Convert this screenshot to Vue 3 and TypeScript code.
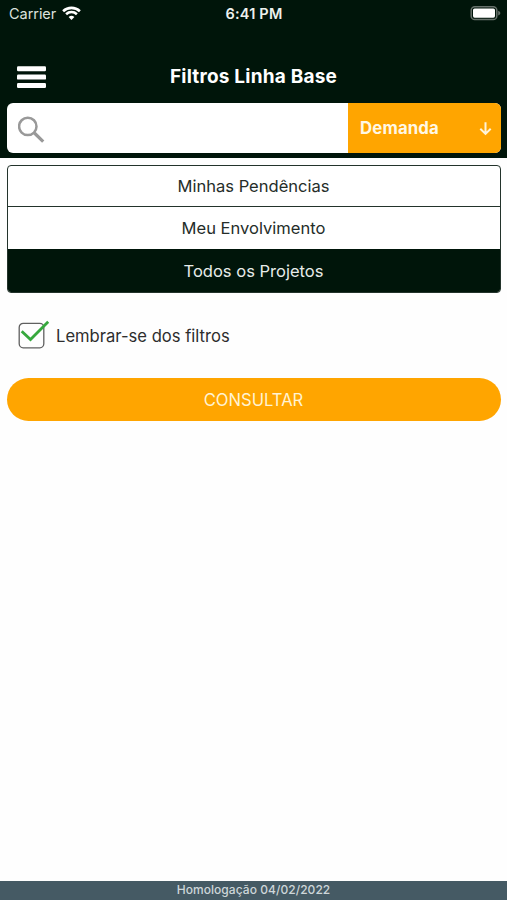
<script setup lang="ts">
import { ref } from 'vue'

const query = ref<string>('')
const remember = ref<boolean>(true)
const selected = ref<number>(2)
const options: { label: string; cls: string }[] = [
  { label: 'Minhas Pendências', cls: 'pending' },
  { label: 'Meu Envolvimento', cls: 'involved' },
  { label: 'Todos os Projetos', cls: 'all' },
]
</script>

<template>
  <div class="screen">
    <header class="header">
      <div class="status">
        <div class="carrier">
          <span class="carrier-name">Carrier</span>
          <svg class="wifi" width="19" height="15" viewBox="0 0 19 15">
            <path d="M1.1 5.2a12.2 12.2 0 0 1 16.8 0" />
            <path d="M4.1 8.2a7.9 7.9 0 0 1 10.8 0" />
            <path class="dot" d="M9.5 14 6.6 11.1a4.2 4.2 0 0 1 5.8 0z" />
          </svg>
        </div>
        <span class="time">6:41 PM</span>
        <svg class="battery" width="31" height="16" viewBox="0 0 31 16">
          <rect class="case" x="1.2" y="1.7" width="25.6" height="12.8" rx="3.6" />
          <rect class="charge" x="3" y="3.5" width="22" height="9.2" rx="1.6" />
          <path class="tip" d="M28.2 5.8c2.8 1.2 2.8 3.6 0 4.8z" />
        </svg>
      </div>
      <div class="navbar">
        <button class="menu" aria-label="Menu">
          <svg width="29" height="22" viewBox="0 0 29 22">
            <rect y="0.2" width="29" height="5" rx="1.2" />
            <rect y="8.6" width="29" height="5" rx="1.2" />
            <rect y="17" width="29" height="5" rx="1.2" />
          </svg>
        </button>
        <h1><span class="title">Filtros Linha Base</span></h1>
      </div>
      <div class="search">
        <label class="field">
          <svg width="28" height="28" viewBox="0 0 28 28">
            <circle cx="9.8" cy="10.4" r="8.7" />
            <path class="handle" d="m16.4 17 8.8 8.6" />
          </svg>
          <input v-model="query" type="text" />
        </label>
        <button class="type">
          <span class="type-name">Demanda</span>
          <svg width="13" height="15" viewBox="0 0 13 15">
            <path d="M6.5 1.2v11.6M1.3 7.7l5.2 5.2 5.2-5.2" />
          </svg>
        </button>
      </div>
    </header>

    <main class="content">
      <div class="options">
        <button
          v-for="(option, i) in options"
          :key="option.cls"
          class="option"
          :class="{ active: selected === i }"
          @click="selected = i"
        >
          <span :class="option.cls">{{ option.label }}</span>
        </button>
      </div>
      <div class="remember" @click="remember = !remember">
        <svg width="34" height="30" viewBox="0 0 34 30">
          <rect class="box" x="1.2" y="3.4" width="24.6" height="24.4" rx="4" />
          <path v-if="remember" class="check" d="m3.7 11.2 8.8 8.3L30.2 1.8" />
        </svg>
        <span class="remember-text">Lembrar-se dos filtros</span>
      </div>
      <button class="submit"><span class="submit-text">CONSULTAR</span></button>
    </main>

    <footer class="footer"><span class="build">Homologação 04/02/2022</span></footer>
  </div>
</template>

<style>
body {
  background: #fff;
}
</style>

<style scoped>
.screen {
  display: flex;
  flex-direction: column;
  height: 900px;
  font-family: Inter, "Liberation Sans", sans-serif;
  background: #fefefe;
}
.screen * {
  box-sizing: border-box;
}
button {
  padding: 0;
  border: 0;
  background: none;
  font: inherit;
  color: inherit;
}
svg {
  display: block;
  flex: none;
  fill: none;
}
span {
  white-space: nowrap;
}
.header {
  height: 158px;
  background: #00150a;
  color: #fff;
}
.status {
  display: grid;
  grid-template-columns: 1fr auto 1fr;
  align-items: center;
  height: 26px;
  padding: 0 6px 0 9px;
}
.carrier {
  display: flex;
  align-items: center;
  gap: 6px;
}
.carrier-name {
  font-size: 14.5px;
  letter-spacing: -0.05px;
  color: #dce2dd;
}
.wifi path {
  stroke: #fff;
  stroke-width: 2.6;
}
.wifi .dot {
  stroke: none;
  fill: #fff;
}
.time {
  margin-right: 2px;
  font-size: 14.5px;
  letter-spacing: 0.2px;
  font-weight: 600;
  color: #edf1ee;
}
.battery {
  justify-self: end;
}
.case {
  stroke: #66716b;
  stroke-width: 1.5;
}
.charge {
  fill: #fff;
}
.tip {
  fill: #66716b;
}
.navbar {
  display: grid;
  grid-template-columns: 50px 1fr 50px;
  align-items: center;
  height: 77px;
  padding-top: 24px;
}
.menu {
  width: 29px;
  margin-left: 17px;
}
.menu svg {
  margin-top: 1px;
  fill: #fff;
}
h1 {
  margin: 0;
  font-size: 19px;
  line-height: 24px;
  font-weight: 700;
  letter-spacing: 0.2px;
  text-align: center;
}
.search {
  display: flex;
  height: 50px;
  margin: 0 6px 0 7px;
  border-radius: 6px;
  overflow: hidden;
  background: #fff;
}
.field {
  display: flex;
  flex: 1;
  align-items: center;
  padding: 4px 0 0 10.5px;
}
.field svg {
  stroke: #999;
  stroke-width: 2.5;
}
.field .handle {
  stroke-width: 3.2;
}
.field input {
  flex: 1;
  min-width: 0;
  border: 0;
  outline: 0;
  background: transparent;
  font: inherit;
}
.type {
  display: flex;
  align-items: center;
  justify-content: space-between;
  width: 153px;
  padding: 0 9px 0 12px;
  background: #ffa500;
}
.type-name {
  font-size: 16.8px;
  font-weight: 700;
  letter-spacing: 0.15px;
  color: #fff8e5;
}
.type svg {
  stroke: #fff4d8;
  stroke-width: 2;
}
.content {
  flex: 1;
  padding: 7px 6px 0 7px;
}
.options {
  height: 128px;
  border: 1px solid #23332b;
  border-radius: 4px;
  overflow: hidden;
  background: #fff;
}
.option {
  display: flex;
  align-items: center;
  justify-content: center;
  width: 100%;
  height: 42px;
  padding-right: 1px;
  font-size: 16.55px;
  color: #252d29;
}
.option:first-child {
  height: 41px;
  border-bottom: 1px solid #23332b;
}
.option.active {
  height: 43px;
  background: #00150a;
  color: #e7ece9;
}
.remember {
  display: flex;
  align-items: center;
  height: 30px;
  margin-top: 27px;
  padding-left: 11px;
}
.remember-text {
  margin-left: 4px;
  padding-top: 1px;
  font-size: 16.6px;
  color: #2e2e2e;
}
.box {
  stroke: #606060;
  stroke-width: 1.3;
}
.check {
  stroke: #36a83d;
  stroke-width: 2.8;
}
.submit {
  display: flex;
  align-items: center;
  justify-content: center;
  width: 100%;
  height: 43px;
  margin-top: 28px;
  padding-right: 1px;
  border-radius: 22px;
  background: #ffa500;
  font-size: 16.6px;
  color: #fff3d3;
}
.footer {
  height: 19px;
  background: #455a64;
  text-align: center;
  font-size: 12px;
  line-height: 17px;
  font-weight: 500;
  letter-spacing: 0.05px;
  color: #ced6d9;
}
</style>
